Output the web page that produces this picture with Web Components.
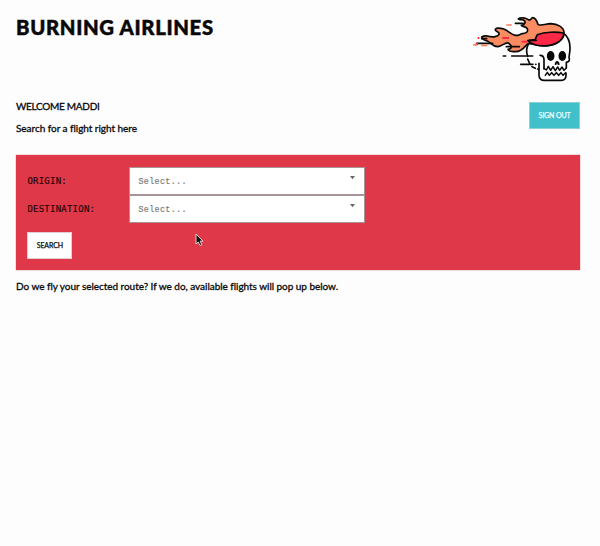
<!DOCTYPE html>
<html lang="en">
<head>
<meta charset="utf-8">
<title>Burning Airlines</title>
<style>
html,body{margin:0;background:#fefdfe;height:546px;overflow:hidden}
body{font-family:Lato,"Open Sans",sans-serif;color:#080808}
</style>
</head>
<body>
<airline-app></airline-app>
<script>
const define = (name, html) => customElements.define(name, class extends HTMLElement {
  constructor() {
    super();
    this.attachShadow({mode: 'open'}).innerHTML = html;
  }
});

define('skull-logo', `<style>:host{display:block;width:120px;height:85px}svg{display:block}</style>
<svg width="120" height="85" viewBox="0 0 360 255" fill="none" stroke="#090909" stroke-width="5" stroke-linejoin="round" stroke-linecap="round">
<path fill="#fff" stroke="none" d="M186 118C182 150 195 180 221 193L237 192H304V172Q317 170 312 157C320 130 315 98 294 83Z"/>
<path d="M190 118C182 132 184 143 188 154M188 162L194 176M201 185L211 190M218 192L221 193M225 151Q237 151 237 164V192M294 83C306 92 315 108 315 128C315 143 313 147 312 157Q317 170 304 172V189"/>
<path d="M222 175V211Q223 226 238 226H289Q303 226 303 211V205"/>
<path stroke-width="4.5" d="M237 190L244 195L250 184L257 196L264 185L271 197L278 186L284 196L291 186L297 196L304 189M241 211L247 202L253 211L260 203L267 211L274 203L281 211L288 203L294 211L302 203"/>
<path d="M115 153H122M140 153H203M167 178H204M212 178H213"/>
<path fill="#fb8b60" d="M50 96C58 91 65 92 72 94C84 97 98 95 102 88C104 80 96 83 91 75C90 68 104 68 116 72C132 78 137 88 151 91C160 93 163 88 172 86C183 84 190 82 187 71C183 64 172 66 169 61C181 59 184 49 175 45C167 42 162 46 160 42C167 36 182 38 190 44C200 48 197 38 203 38C212 38 216 49 219 58C227 64 239 57 257 56C278 57 296 66 297 83C297 105 274 121 242 122C215 124 204 114 189 116C179 123 174 139 152 140C138 140 129 137 129 133C142 131 141 122 130 114C119 112 112 123 99 125C82 126 78 113 67 108C59 105 54 107 50 96Z"/>
<path fill="#fc2845" d="M188 107L210 104L217 89C240 80 274 80 295 84C299 98 281 116 253 121C222 126 201 119 188 107Z"/>
<path d="M194 106H214M151 55H175M35 115H83M124 125H163M50 101H65"/>
<path stroke="#fd2945" stroke-width="6" stroke-linecap="butt" d="M112 99H132M170 110H186M32 117H39M38 99H43"/>
<path stroke="#fb7952" stroke-width="5" stroke-linecap="butt" d="M124 60H140M24 120H36M49 121H67"/>
<g fill="#090909" stroke="none"><ellipse cx="257" cy="153" rx="11.5" ry="15"/><ellipse cx="292" cy="153" rx="11.5" ry="15"/><path d="M269 178Q271 168 276 168Q282 168 284 178Q283 181 278 179L276 174L274 179Q269 181 269 178Z"/></g>
</svg>`);

define('push-button', `<style>
:host{display:block}
button{display:block;box-sizing:border-box;width:100%;height:27px;padding:0;border:1px solid var(--edge,#e3cfd0);border-radius:0;background:var(--fill,#fff);color:var(--ink,#080808);font:400 7px/25px Lato,sans-serif;letter-spacing:var(--track,-.1px);-webkit-text-stroke:.25px}
</style><button type="button"><slot></slot></button>`);

define('select-field', `<style>
:host{display:grid;grid-template-columns:102px 235.6px;align-items:center;height:28px}
.label{font:9px/14px "DejaVu Sans Mono",monospace;letter-spacing:.23px;color:#240307;-webkit-text-stroke:.15px;padding-bottom:1px}
.box{box-sizing:border-box;height:28px;border:1px solid #a79496;background:#fff;display:flex;justify-content:space-between;padding:0 8px 0 8px;font:8.4px/28px "Liberation Mono",monospace;letter-spacing:.35px;color:#777;-webkit-text-stroke:.15px}
svg{display:block;margin-top:8px}
</style><span class="label"><slot></slot></span><div class="box"><span>Select...</span><svg width="7" height="4"><path d="M1 0H6L3.5 3.2Z" fill="#666"/></svg></div>`);

define('search-panel', `<style>
:host{display:block;box-sizing:border-box;height:115px;background:#df3848;padding:12px 12px 12px 11.4px;box-shadow:0 0 1px #df3848}
push-button{width:45px;margin-top:9px}
</style><select-field>ORIGIN:</select-field><select-field>DESTINATION:</select-field><push-button>SEARCH</push-button>`);

define('mouse-pointer', `<style>:host{position:absolute;left:195px;top:233px}svg{display:block}</style>
<svg width="9" height="14" viewBox="0 0 9 14"><path d="M1 1V11L3.2 9L5 12.5L6.8 11.7L5.2 8.2H8Z" fill="#111" stroke="#f5dfe0" stroke-width=".9"/></svg>`);

define('airline-app', `<style>
:host{display:block;position:relative;box-sizing:border-box;height:546px;padding:5px 20px 0 16px}
header,.account{display:flex;justify-content:space-between;align-items:flex-start}
header{height:92px}
h1{margin:9px 0 0;font:900 20.3px/26px Lato,sans-serif;letter-spacing:.68px;-webkit-text-stroke:.5px;white-space:nowrap}
skull-logo{margin-right:-5px}
.account{height:58px}
p{margin:0;font:400 10px/22px Lato,sans-serif;letter-spacing:-.04px;-webkit-text-stroke:.3px;white-space:nowrap}
.welcome{margin-top:-2px;letter-spacing:-.28px}
.account push-button{width:51px;margin-top:5px;--fill:#42c0ca;--edge:#8acfd5;--ink:#effcff}
.hint{margin-top:5px}
</style>
<header><h1>BURNING AIRLINES</h1><skull-logo></skull-logo></header>
<section class="account"><div><p class="welcome">WELCOME MADDI</p><p class="search">Search for a flight right here</p></div><push-button>SIGN OUT</push-button></section>
<search-panel></search-panel>
<p class="hint">Do we fly your selected route? If we do, available flights will pop up below.</p>
<mouse-pointer></mouse-pointer>`);
</script>
</body>
</html>
